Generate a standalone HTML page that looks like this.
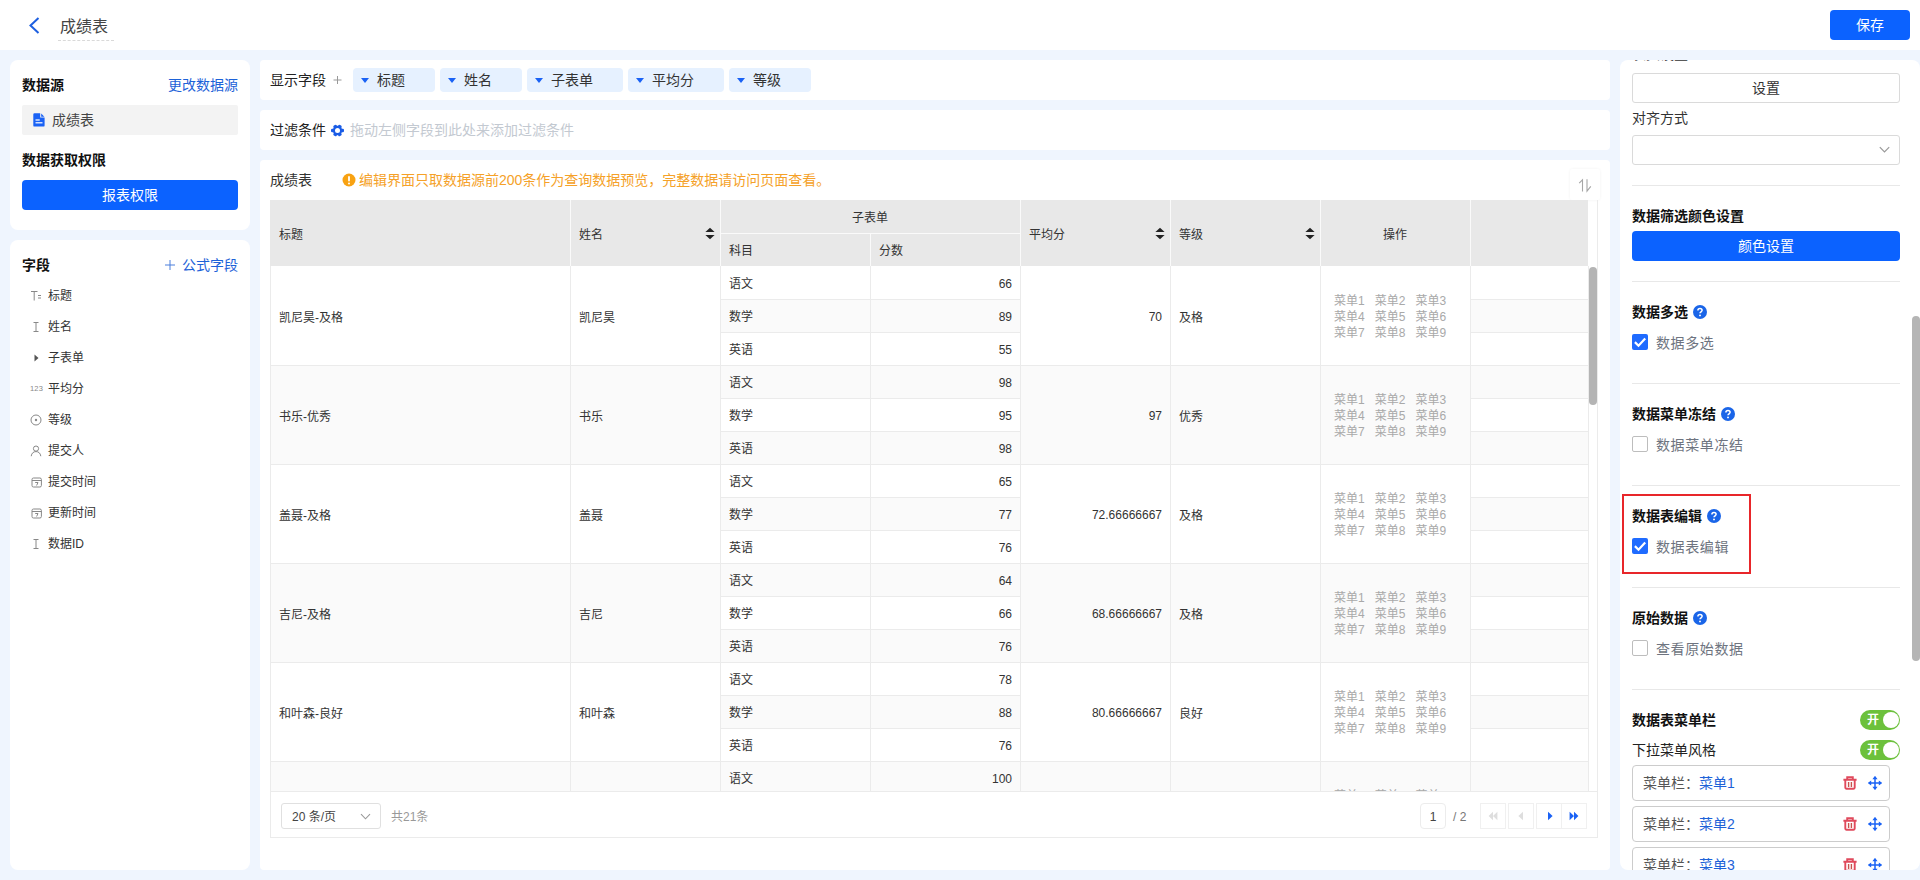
<!DOCTYPE html>
<html lang="zh-CN">
<head>
<meta charset="utf-8">
<title>成绩表</title>
<style>
*{box-sizing:border-box;margin:0;padding:0}
html,body{width:1920px;height:880px;overflow:hidden}
body{position:relative;background:#eff5fe;font-family:"Liberation Sans","Noto Sans CJK SC",sans-serif;font-size:14px;color:#333;line-height:1}
.abs{position:absolute}
.hdr{position:absolute;left:0;top:0;width:1920px;height:50px;background:#fff}
.card{position:absolute;background:#fff;border-radius:8px}
.t{position:absolute;white-space:nowrap;line-height:20px;height:20px}
.b{font-weight:700;color:#111}
.blue{color:#1d62d8}
.btn{position:absolute;background:#0b62ff;color:#fff;border-radius:4px;text-align:center;font-size:14px}
.chip{position:absolute;top:68px;height:24px;background:#e6f1ff;border-radius:4px;font-size:14px;line-height:24px;color:#333;padding-left:24px}
.chip:before{content:"";position:absolute;left:8px;top:10px;border:4.5px solid transparent;border-top:5px solid #1a62f5;border-bottom:0}
.vl{position:absolute;width:1px;background:#ebebeb}
.hl{position:absolute;height:1px;background:#ebebeb}
.c{position:absolute;font-size:12px;color:#333;white-space:nowrap;line-height:20px;height:20px}
.r{text-align:right}
.m{position:absolute;width:130px;font-size:12px;color:#a9a9a9;line-height:16px;white-space:nowrap}
.m span{display:inline-block;margin-right:10px}
.sort{position:absolute;width:10px;height:13px}
.dv{position:absolute;left:1632px;width:268px;height:1px;background:#e8e8e8}
.cb{position:absolute;left:1632px;width:16px;height:16px;border-radius:2px}
.cb.on{background:#1f6bff}
.cb.off{border:1px solid #bdbdbd;background:#fff}
.lb{position:absolute;left:1656px;white-space:nowrap;line-height:20px;height:20px;font-size:14px;letter-spacing:0.6px;color:#6e7480}
.tg{position:absolute;left:1860px;width:40px;height:20px;border-radius:10px;background:#6cc13c;color:#fff;font-size:12px;font-weight:700;line-height:20px;padding-left:7px}
.tg:after{content:"";position:absolute;left:23px;top:2px;width:16px;height:16px;border-radius:8px;background:#fff}
.mb{position:absolute;width:258px;height:36px;border:1px solid #ccc;border-radius:4px}
</style>
</head>
<body>
<div class="hdr">
<svg class="abs" style="left:27px;top:16px" width="14" height="18" viewBox="0 0 14 18"><path d="M11.5 2 L3.5 9.5 L11.5 17" fill="none" stroke="#1d5fe0" stroke-width="2"/></svg>
<div class="t" style="left:60px;top:16.5px;font-size:16px;color:#444">成绩表</div>
<div class="abs" style="left:58px;top:40px;width:56px;height:0;border-top:1px dashed #d9d9d9"></div>
<div class="btn" style="left:1830px;top:10px;width:80px;height:30px;line-height:30px">保存</div>
</div>
<div class="card" style="left:10px;top:60px;width:240px;height:170px"></div>
<div class="card" style="left:10px;top:240px;width:240px;height:630px"></div>
<div class="t b" style="left:22px;top:75px">数据源</div>
<div class="t blue" style="left:168px;top:75px">更改数据源</div>
<div class="abs" style="left:22px;top:105px;width:216px;height:30px;background:#f3f3f3;border-radius:2px"></div>
<svg class="abs" style="left:33px;top:113px" width="12" height="14" viewBox="0 0 12 14"><path d="M1.5 0.3H7.2V4.6H11.6V12.4a1.2 1.2 0 0 1-1.2 1.2H1.5a1.2 1.2 0 0 1-1.2-1.2V1.5a1.2 1.2 0 0 1 1.2-1.2Z" fill="#1a62f5"/><path d="M8.2 0.5L11.4 3.7H8.2Z" fill="#1a62f5"/><rect x="2.5" y="6.4" width="4.2" height="1.2" fill="#fff"/><rect x="2.5" y="9.2" width="7" height="1.2" fill="#fff"/></svg>
<div class="t" style="left:52px;top:110px;color:#444">成绩表</div>
<div class="t b" style="left:22px;top:150px">数据获取权限</div>
<div class="btn" style="left:22px;top:180px;width:216px;height:30px;line-height:30px">报表权限</div>
<div class="t b" style="left:22px;top:255px">字段</div>
<div class="t blue" style="left:182px;top:255px">公式字段</div>
<svg class="abs" style="left:164px;top:259px" width="12" height="12" viewBox="0 0 12 12"><path d="M6 1V11M1 6H11" stroke="#4a7fdc" stroke-width="1" fill="none"/></svg>
<svg class="abs" style="left:29px;top:289px" width="14" height="14" viewBox="0 0 14 14"><path d="M2 2.5H8.5M5.2 2.5V11.5M9 6.5H12M9 9H12" stroke="#888" stroke-width="1" fill="none"/></svg>
<div class="t" style="left:48px;top:286px;font-size:12px;color:#333">标题</div>
<svg class="abs" style="left:29px;top:320px" width="14" height="14" viewBox="0 0 14 14"><path d="M4.5 2.5H9.5M7 2.5V11.5M4.5 11.5H9.5" stroke="#888" stroke-width="1" fill="none"/></svg>
<div class="t" style="left:48px;top:317px;font-size:12px;color:#333">姓名</div>
<svg class="abs" style="left:29px;top:351px" width="14" height="14" viewBox="0 0 14 14"><path d="M5.5 3.5L9.5 7L5.5 10.5Z" fill="#555"/></svg>
<div class="t" style="left:48px;top:348px;font-size:12px;color:#333">子表单</div>
<div class="t" style="left:30px;top:379px;font-size:7.5px;color:#888;letter-spacing:0.2px">123</div>
<div class="t" style="left:48px;top:379px;font-size:12px;color:#333">平均分</div>
<svg class="abs" style="left:29px;top:413px" width="14" height="14" viewBox="0 0 14 14"><circle cx="7" cy="7" r="5" stroke="#888" stroke-width="1" fill="none"/><circle cx="7" cy="7" r="1.2" fill="#888"/></svg>
<div class="t" style="left:48px;top:410px;font-size:12px;color:#333">等级</div>
<svg class="abs" style="left:29px;top:444px" width="14" height="14" viewBox="0 0 14 14"><circle cx="7" cy="4.6" r="2.6" stroke="#888" stroke-width="1" fill="none"/><path d="M2.2 12.2C2.6 9 4.6 7.6 7 7.6S11.4 9 11.8 12.2" stroke="#888" stroke-width="1" fill="none"/></svg>
<div class="t" style="left:48px;top:441px;font-size:12px;color:#333">提交人</div>
<svg class="abs" style="left:29px;top:475px" width="14" height="14" viewBox="0 0 14 14"><rect x="3" y="3" width="9.4" height="9" rx="1.5" stroke="#888" stroke-width="1" fill="none"/><path d="M3 5.5H12.4M6.2 7.5H9L7.6 10.5" stroke="#888" stroke-width="1" fill="none"/></svg>
<div class="t" style="left:48px;top:472px;font-size:12px;color:#333">提交时间</div>
<svg class="abs" style="left:29px;top:506px" width="14" height="14" viewBox="0 0 14 14"><rect x="3" y="3" width="9.4" height="9" rx="1.5" stroke="#888" stroke-width="1" fill="none"/><path d="M3 5.5H12.4M6.2 7.5H9L7.6 10.5" stroke="#888" stroke-width="1" fill="none"/></svg>
<div class="t" style="left:48px;top:503px;font-size:12px;color:#333">更新时间</div>
<svg class="abs" style="left:29px;top:537px" width="14" height="14" viewBox="0 0 14 14"><path d="M4.5 2.5H9.5M7 2.5V11.5M4.5 11.5H9.5" stroke="#888" stroke-width="1" fill="none"/></svg>
<div class="t" style="left:48px;top:534px;font-size:12px;color:#333">数据ID</div>
<div class="card" style="left:260px;top:60px;width:1350px;height:40px;border-radius:4px"></div>
<div class="card" style="left:260px;top:110px;width:1350px;height:40px;border-radius:4px"></div>
<div class="card" style="left:260px;top:160px;width:1350px;height:710px;border-radius:4px"></div>
<div class="t" style="left:270px;top:70px;color:#222">显示字段</div>
<svg class="abs" style="left:332px;top:75px" width="10" height="10" viewBox="0 0 10 10"><path d="M5.5 1V9M1.5 5H9.5" stroke="#999" stroke-width="1" fill="none"/></svg>
<div class="chip" style="left:353px;width:82px">标题</div>
<div class="chip" style="left:440px;width:82px">姓名</div>
<div class="chip" style="left:527px;width:96px">子表单</div>
<div class="chip" style="left:628px;width:96px">平均分</div>
<div class="chip" style="left:729px;width:82px">等级</div>
<div class="t" style="left:270px;top:120px;color:#222">过滤条件</div>
<svg class="abs" style="left:331px;top:123.5px" width="13" height="13" viewBox="0 0 13 13"><g fill="#1a5ce6"><circle cx="6.5" cy="6.5" r="4.7"/><rect x="0" y="4.7" width="13" height="3.6" rx="1.2"/><rect x="0.4" y="4.7" width="12.2" height="3.6" rx="1.2" transform="rotate(60 6.5 6.5)"/><rect x="0.4" y="4.7" width="12.2" height="3.6" rx="1.2" transform="rotate(120 6.5 6.5)"/></g><circle cx="6.5" cy="6.5" r="2.5" fill="#fff"/></svg>
<div class="t" style="left:350px;top:120px;color:#c3c9d1">拖动左侧字段到此处来添加过滤条件</div>
<div class="t" style="left:270px;top:170px;color:#333">成绩表</div>
<svg class="abs" style="left:342px;top:173px" width="14" height="14" viewBox="0 0 14 14"><circle cx="7" cy="7" r="6.5" fill="#f8a212"/><rect x="6.1" y="3" width="1.8" height="5.4" rx="0.9" fill="#fff"/><circle cx="7" cy="10.4" r="1" fill="#fff"/></svg>
<div class="t" style="left:359px;top:170px;color:#f5a128">编辑界面只取数据源前200条作为查询数据预览，完整数据请访问页面查看。</div>
<div class="abs" style="left:1570px;top:169px;width:30px;height:31px;background:#fff;box-shadow:0 0 3px rgba(0,0,0,0.06);border-radius:2px"></div>
<svg class="abs" style="left:1577px;top:177px" width="16" height="16" viewBox="0 0 16 16"><path d="M2.2 6.2L5.5 2.8V14.4M10 2.3V14.2L13.8 9.3" fill="none" stroke="#a6a6a6" stroke-width="1.1"/></svg>
<div class="abs" style="left:270px;top:200px;width:1318px;height:66px;background:#e8e8e8"></div>
<div class="abs" style="left:570px;top:200px;width:1px;height:66px;background:#fafafa"></div>
<div class="abs" style="left:720px;top:200px;width:1px;height:66px;background:#fafafa"></div>
<div class="abs" style="left:1020px;top:200px;width:1px;height:66px;background:#fafafa"></div>
<div class="abs" style="left:1170px;top:200px;width:1px;height:66px;background:#fafafa"></div>
<div class="abs" style="left:1320px;top:200px;width:1px;height:66px;background:#fafafa"></div>
<div class="abs" style="left:1470px;top:200px;width:1px;height:66px;background:#fafafa"></div>
<div class="abs" style="left:870px;top:233px;width:1px;height:33px;background:#fafafa"></div>
<div class="abs" style="left:721px;top:233px;width:299px;height:1px;background:#fafafa"></div>
<div class="c" style="left:279px;top:225px">标题</div><div class="c" style="left:579px;top:225px">姓名</div><div class="c" style="left:820px;top:208px;width:100px;text-align:center">子表单</div><div class="c" style="left:729px;top:241px">科目</div><div class="c" style="left:879px;top:241px">分数</div><div class="c" style="left:1029px;top:225px">平均分</div><div class="c" style="left:1179px;top:225px">等级</div><div class="c" style="left:1345px;top:225px;width:100px;text-align:center">操作</div>
<svg class="sort" style="left:705px;top:227px" viewBox="0 0 10 13"><path d="M0.4 5.1L5 0.8L9.6 5.1Z" fill="#222"/><path d="M0.4 7.9L5 12.2L9.6 7.9Z" fill="#222"/></svg>
<svg class="sort" style="left:1155px;top:227px" viewBox="0 0 10 13"><path d="M0.4 5.1L5 0.8L9.6 5.1Z" fill="#222"/><path d="M0.4 7.9L5 12.2L9.6 7.9Z" fill="#222"/></svg>
<svg class="sort" style="left:1305px;top:227px" viewBox="0 0 10 13"><path d="M0.4 5.1L5 0.8L9.6 5.1Z" fill="#222"/><path d="M0.4 7.9L5 12.2L9.6 7.9Z" fill="#222"/></svg>
<div class="abs" style="left:270px;top:266px;width:1318px;height:526px;overflow:hidden">
<div class="abs" style="left:451px;top:0px;width:299px;height:33px;background:#fff"></div>
<div class="abs" style="left:1201px;top:0px;width:117px;height:33px;background:#fff"></div>
<div class="abs" style="left:451px;top:33px;width:299px;height:33px;background:#fafafa"></div>
<div class="abs" style="left:1201px;top:33px;width:117px;height:33px;background:#fafafa"></div>
<div class="abs" style="left:451px;top:66px;width:299px;height:33px;background:#fff"></div>
<div class="abs" style="left:1201px;top:66px;width:117px;height:33px;background:#fff"></div>
<div class="abs" style="left:0;top:99px;width:1318px;height:99px;background:#fafafa"></div>
<div class="abs" style="left:451px;top:99px;width:299px;height:33px;background:#fafafa"></div>
<div class="abs" style="left:1201px;top:99px;width:117px;height:33px;background:#fafafa"></div>
<div class="abs" style="left:451px;top:132px;width:299px;height:33px;background:#fff"></div>
<div class="abs" style="left:1201px;top:132px;width:117px;height:33px;background:#fff"></div>
<div class="abs" style="left:451px;top:165px;width:299px;height:33px;background:#fafafa"></div>
<div class="abs" style="left:1201px;top:165px;width:117px;height:33px;background:#fafafa"></div>
<div class="abs" style="left:451px;top:198px;width:299px;height:33px;background:#fff"></div>
<div class="abs" style="left:1201px;top:198px;width:117px;height:33px;background:#fff"></div>
<div class="abs" style="left:451px;top:231px;width:299px;height:33px;background:#fafafa"></div>
<div class="abs" style="left:1201px;top:231px;width:117px;height:33px;background:#fafafa"></div>
<div class="abs" style="left:451px;top:264px;width:299px;height:33px;background:#fff"></div>
<div class="abs" style="left:1201px;top:264px;width:117px;height:33px;background:#fff"></div>
<div class="abs" style="left:0;top:297px;width:1318px;height:99px;background:#fafafa"></div>
<div class="abs" style="left:451px;top:297px;width:299px;height:33px;background:#fafafa"></div>
<div class="abs" style="left:1201px;top:297px;width:117px;height:33px;background:#fafafa"></div>
<div class="abs" style="left:451px;top:330px;width:299px;height:33px;background:#fff"></div>
<div class="abs" style="left:1201px;top:330px;width:117px;height:33px;background:#fff"></div>
<div class="abs" style="left:451px;top:363px;width:299px;height:33px;background:#fafafa"></div>
<div class="abs" style="left:1201px;top:363px;width:117px;height:33px;background:#fafafa"></div>
<div class="abs" style="left:451px;top:396px;width:299px;height:33px;background:#fff"></div>
<div class="abs" style="left:1201px;top:396px;width:117px;height:33px;background:#fff"></div>
<div class="abs" style="left:451px;top:429px;width:299px;height:33px;background:#fafafa"></div>
<div class="abs" style="left:1201px;top:429px;width:117px;height:33px;background:#fafafa"></div>
<div class="abs" style="left:451px;top:462px;width:299px;height:33px;background:#fff"></div>
<div class="abs" style="left:1201px;top:462px;width:117px;height:33px;background:#fff"></div>
<div class="abs" style="left:0;top:495px;width:1318px;height:99px;background:#fafafa"></div>
<div class="abs" style="left:451px;top:495px;width:299px;height:33px;background:#fafafa"></div>
<div class="abs" style="left:1201px;top:495px;width:117px;height:33px;background:#fafafa"></div>
<div class="abs" style="left:451px;top:528px;width:299px;height:33px;background:#fff"></div>
<div class="abs" style="left:1201px;top:528px;width:117px;height:33px;background:#fff"></div>
<div class="abs" style="left:451px;top:561px;width:299px;height:33px;background:#fafafa"></div>
<div class="abs" style="left:1201px;top:561px;width:117px;height:33px;background:#fafafa"></div>
<div class="hl" style="left:451px;top:33px;width:299px"></div>
<div class="hl" style="left:1201px;top:33px;width:117px"></div>
<div class="hl" style="left:451px;top:66px;width:299px"></div>
<div class="hl" style="left:1201px;top:66px;width:117px"></div>
<div class="hl" style="left:451px;top:99px;width:299px"></div>
<div class="hl" style="left:1201px;top:99px;width:117px"></div>
<div class="hl" style="left:0;top:99px;width:1318px"></div>
<div class="hl" style="left:451px;top:132px;width:299px"></div>
<div class="hl" style="left:1201px;top:132px;width:117px"></div>
<div class="hl" style="left:451px;top:165px;width:299px"></div>
<div class="hl" style="left:1201px;top:165px;width:117px"></div>
<div class="hl" style="left:451px;top:198px;width:299px"></div>
<div class="hl" style="left:1201px;top:198px;width:117px"></div>
<div class="hl" style="left:0;top:198px;width:1318px"></div>
<div class="hl" style="left:451px;top:231px;width:299px"></div>
<div class="hl" style="left:1201px;top:231px;width:117px"></div>
<div class="hl" style="left:451px;top:264px;width:299px"></div>
<div class="hl" style="left:1201px;top:264px;width:117px"></div>
<div class="hl" style="left:451px;top:297px;width:299px"></div>
<div class="hl" style="left:1201px;top:297px;width:117px"></div>
<div class="hl" style="left:0;top:297px;width:1318px"></div>
<div class="hl" style="left:451px;top:330px;width:299px"></div>
<div class="hl" style="left:1201px;top:330px;width:117px"></div>
<div class="hl" style="left:451px;top:363px;width:299px"></div>
<div class="hl" style="left:1201px;top:363px;width:117px"></div>
<div class="hl" style="left:451px;top:396px;width:299px"></div>
<div class="hl" style="left:1201px;top:396px;width:117px"></div>
<div class="hl" style="left:0;top:396px;width:1318px"></div>
<div class="hl" style="left:451px;top:429px;width:299px"></div>
<div class="hl" style="left:1201px;top:429px;width:117px"></div>
<div class="hl" style="left:451px;top:462px;width:299px"></div>
<div class="hl" style="left:1201px;top:462px;width:117px"></div>
<div class="hl" style="left:451px;top:495px;width:299px"></div>
<div class="hl" style="left:1201px;top:495px;width:117px"></div>
<div class="hl" style="left:0;top:495px;width:1318px"></div>
<div class="hl" style="left:451px;top:528px;width:299px"></div>
<div class="hl" style="left:1201px;top:528px;width:117px"></div>
<div class="hl" style="left:451px;top:561px;width:299px"></div>
<div class="hl" style="left:1201px;top:561px;width:117px"></div>
<div class="hl" style="left:451px;top:594px;width:299px"></div>
<div class="hl" style="left:1201px;top:594px;width:117px"></div>
<div class="hl" style="left:0;top:594px;width:1318px"></div>
<div class="vl" style="left:300px;top:0;height:526px"></div>
<div class="vl" style="left:450px;top:0;height:526px"></div>
<div class="vl" style="left:600px;top:0;height:526px"></div>
<div class="vl" style="left:750px;top:0;height:526px"></div>
<div class="vl" style="left:900px;top:0;height:526px"></div>
<div class="vl" style="left:1050px;top:0;height:526px"></div>
<div class="vl" style="left:1200px;top:0;height:526px"></div>
<div class="c" style="left:459px;top:8px">语文</div>
<div class="c r" style="left:601px;top:8px;width:141px">66</div>
<div class="c" style="left:459px;top:41px">数学</div>
<div class="c r" style="left:601px;top:41px;width:141px">89</div>
<div class="c" style="left:459px;top:74px">英语</div>
<div class="c r" style="left:601px;top:74px;width:141px">55</div>
<div class="c" style="left:9px;top:42px">凯尼昊-及格</div>
<div class="c" style="left:309px;top:42px">凯尼昊</div>
<div class="c r" style="left:751px;top:41px;width:141px">70</div>
<div class="c" style="left:909px;top:42px">及格</div>
<div class="m" style="left:1064px;top:27px"><span>菜单1</span><span>菜单2</span><span>菜单3</span><br><span>菜单4</span><span>菜单5</span><span>菜单6</span><br><span>菜单7</span><span>菜单8</span><span>菜单9</span></div>
<div class="c" style="left:459px;top:107px">语文</div>
<div class="c r" style="left:601px;top:107px;width:141px">98</div>
<div class="c" style="left:459px;top:140px">数学</div>
<div class="c r" style="left:601px;top:140px;width:141px">95</div>
<div class="c" style="left:459px;top:173px">英语</div>
<div class="c r" style="left:601px;top:173px;width:141px">98</div>
<div class="c" style="left:9px;top:141px">书乐-优秀</div>
<div class="c" style="left:309px;top:141px">书乐</div>
<div class="c r" style="left:751px;top:140px;width:141px">97</div>
<div class="c" style="left:909px;top:141px">优秀</div>
<div class="m" style="left:1064px;top:126px"><span>菜单1</span><span>菜单2</span><span>菜单3</span><br><span>菜单4</span><span>菜单5</span><span>菜单6</span><br><span>菜单7</span><span>菜单8</span><span>菜单9</span></div>
<div class="c" style="left:459px;top:206px">语文</div>
<div class="c r" style="left:601px;top:206px;width:141px">65</div>
<div class="c" style="left:459px;top:239px">数学</div>
<div class="c r" style="left:601px;top:239px;width:141px">77</div>
<div class="c" style="left:459px;top:272px">英语</div>
<div class="c r" style="left:601px;top:272px;width:141px">76</div>
<div class="c" style="left:9px;top:240px">盖聂-及格</div>
<div class="c" style="left:309px;top:240px">盖聂</div>
<div class="c r" style="left:751px;top:239px;width:141px">72.66666667</div>
<div class="c" style="left:909px;top:240px">及格</div>
<div class="m" style="left:1064px;top:225px"><span>菜单1</span><span>菜单2</span><span>菜单3</span><br><span>菜单4</span><span>菜单5</span><span>菜单6</span><br><span>菜单7</span><span>菜单8</span><span>菜单9</span></div>
<div class="c" style="left:459px;top:305px">语文</div>
<div class="c r" style="left:601px;top:305px;width:141px">64</div>
<div class="c" style="left:459px;top:338px">数学</div>
<div class="c r" style="left:601px;top:338px;width:141px">66</div>
<div class="c" style="left:459px;top:371px">英语</div>
<div class="c r" style="left:601px;top:371px;width:141px">76</div>
<div class="c" style="left:9px;top:339px">吉尼-及格</div>
<div class="c" style="left:309px;top:339px">吉尼</div>
<div class="c r" style="left:751px;top:338px;width:141px">68.66666667</div>
<div class="c" style="left:909px;top:339px">及格</div>
<div class="m" style="left:1064px;top:324px"><span>菜单1</span><span>菜单2</span><span>菜单3</span><br><span>菜单4</span><span>菜单5</span><span>菜单6</span><br><span>菜单7</span><span>菜单8</span><span>菜单9</span></div>
<div class="c" style="left:459px;top:404px">语文</div>
<div class="c r" style="left:601px;top:404px;width:141px">78</div>
<div class="c" style="left:459px;top:437px">数学</div>
<div class="c r" style="left:601px;top:437px;width:141px">88</div>
<div class="c" style="left:459px;top:470px">英语</div>
<div class="c r" style="left:601px;top:470px;width:141px">76</div>
<div class="c" style="left:9px;top:438px">和叶森-良好</div>
<div class="c" style="left:309px;top:438px">和叶森</div>
<div class="c r" style="left:751px;top:437px;width:141px">80.66666667</div>
<div class="c" style="left:909px;top:438px">良好</div>
<div class="m" style="left:1064px;top:423px"><span>菜单1</span><span>菜单2</span><span>菜单3</span><br><span>菜单4</span><span>菜单5</span><span>菜单6</span><br><span>菜单7</span><span>菜单8</span><span>菜单9</span></div>
<div class="c" style="left:459px;top:503px">语文</div>
<div class="c r" style="left:601px;top:503px;width:141px">100</div>
<div class="c" style="left:459px;top:536px">数学</div>
<div class="c r" style="left:601px;top:536px;width:141px"></div>
<div class="c" style="left:459px;top:569px">英语</div>
<div class="c r" style="left:601px;top:569px;width:141px"></div>
<div class="m" style="left:1064px;top:522px"><span>菜单1</span><span>菜单2</span><span>菜单3</span><br><span>菜单4</span><span>菜单5</span><span>菜单6</span><br><span>菜单7</span><span>菜单8</span><span>菜单9</span></div>
</div>
<div class="vl" style="left:270px;top:266px;height:572px"></div>
<div class="vl" style="left:1588px;top:266px;height:526px"></div>
<div class="vl" style="left:1597px;top:200px;height:638px"></div>
<div class="hl" style="left:270px;top:791px;width:1328px"></div>
<div class="hl" style="left:270px;top:837px;width:1328px"></div>
<div class="abs" style="left:1589px;top:267px;width:8px;height:138px;border-radius:4px;background:#b4b4b4"></div>
<div class="abs" style="left:281px;top:803px;width:100px;height:26px;border:1px solid #e0e0e0;border-radius:3px"></div>
<div class="c" style="left:292px;top:807px;color:#444">20 条/页</div>
<svg class="abs" style="left:360px;top:813px" width="11" height="8" viewBox="0 0 11 8"><path d="M1 1.2L5.5 5.8L10 1.2" fill="none" stroke="#999" stroke-width="1.1"/></svg>
<div class="c" style="left:391px;top:807px;color:#999">共21条</div>
<div class="abs" style="left:1420px;top:803px;width:26px;height:26px;border:1px solid #ececec;border-radius:4px"></div>
<div class="c" style="left:1420px;top:807px;width:26px;text-align:center;color:#444">1</div>
<div class="c" style="left:1453px;top:807px;color:#777">/ 2</div>
<div class="abs" style="left:1480px;top:803px;width:26px;height:26px;border:1px solid #f0f0f0"></div>
<div class="abs" style="left:1508px;top:803px;width:26px;height:26px;border:1px solid #f0f0f0"></div>
<div class="abs" style="left:1536px;top:803px;width:26px;height:26px;border:1px solid #f0f0f0"></div>
<div class="abs" style="left:1561px;top:803px;width:26px;height:26px;border:1px solid #f0f0f0"></div>
<svg class="abs" style="left:1488px;top:811px" width="10" height="10" viewBox="0 0 10 10"><path d="M5 0.8V9.2L0.6 5ZM9.4 0.8V9.2L5 5Z" fill="#dedede"/></svg>
<svg class="abs" style="left:1516px;top:811px" width="10" height="10" viewBox="0 0 10 10"><path d="M7 0.8V9.2L2.4 5Z" fill="#dedede"/></svg>
<svg class="abs" style="left:1545px;top:811px" width="10" height="10" viewBox="0 0 10 10"><path d="M3 0.8V9.2L7.6 5Z" fill="#1a62f5"/></svg>
<svg class="abs" style="left:1569px;top:811px" width="10" height="10" viewBox="0 0 10 10"><path d="M0.6 0.8V9.2L5 5ZM5 0.8V9.2L9.4 5Z" fill="#1a62f5"/></svg>
<div class="abs" style="left:1620px;top:60px;width:300px;height:810px;background:#fff;border-radius:8px;overflow:hidden">
<div class="t" style="left:12px;top:-16px;color:#333">表头设置</div>
</div>
<div class="abs" style="left:1912px;top:316px;width:8px;height:345px;border-radius:4px;background:#b5b5b5"></div>
<div class="abs" style="left:1632px;top:73px;width:268px;height:30px;border:1px solid #dadada;border-radius:3px;text-align:center;line-height:28px;color:#333">设置</div>
<div class="t" style="left:1632px;top:108px;color:#333">对齐方式</div>
<div class="abs" style="left:1632px;top:135px;width:268px;height:30px;border:1px solid #dadada;border-radius:3px"></div>
<svg class="abs" style="left:1879px;top:146px" width="11" height="8" viewBox="0 0 11 8"><path d="M0.8 1.2L5.5 6L10.2 1.2" fill="none" stroke="#999" stroke-width="1.2"/></svg>
<div class="dv" style="top:185px"></div>
<div class="t b" style="left:1632px;top:206px">数据筛选颜色设置</div>
<div class="btn" style="left:1632px;top:231px;width:268px;height:30px;line-height:30px">颜色设置</div>
<div class="dv" style="top:281px"></div>
<div class="t b" style="left:1632px;top:302px">数据多选</div>
<svg class="abs" style="left:1693px;top:305px" width="14" height="14" viewBox="0 0 14 14"><circle cx="7" cy="7" r="7" fill="#1a65e8"/><path d="M4.9 5.5C4.9 4.2 5.8 3.4 7 3.4S9.1 4.2 9.1 5.3C9.1 6.7 7 6.9 7 8.3" fill="none" stroke="#fff" stroke-width="1.5"/><circle cx="7" cy="10.4" r="0.95" fill="#fff"/></svg>
<div class="cb on" style="top:334px"></div>
<svg class="abs" style="left:1632px;top:334px" width="16" height="16" viewBox="0 0 16 16"><path d="M2.9 8.1L6.5 11.7L13.2 4.5" fill="none" stroke="#fff" stroke-width="2.2"/></svg>
<div class="lb" style="top:333px">数据多选</div>
<div class="dv" style="top:383px"></div>
<div class="t b" style="left:1632px;top:404px">数据菜单冻结</div>
<svg class="abs" style="left:1721px;top:407px" width="14" height="14" viewBox="0 0 14 14"><circle cx="7" cy="7" r="7" fill="#1a65e8"/><path d="M4.9 5.5C4.9 4.2 5.8 3.4 7 3.4S9.1 4.2 9.1 5.3C9.1 6.7 7 6.9 7 8.3" fill="none" stroke="#fff" stroke-width="1.5"/><circle cx="7" cy="10.4" r="0.95" fill="#fff"/></svg>
<div class="cb off" style="top:436px"></div>
<div class="lb" style="top:435px">数据菜单冻结</div>
<div class="dv" style="top:485px"></div>
<div class="t b" style="left:1632px;top:506px">数据表编辑</div>
<svg class="abs" style="left:1707px;top:509px" width="14" height="14" viewBox="0 0 14 14"><circle cx="7" cy="7" r="7" fill="#1a65e8"/><path d="M4.9 5.5C4.9 4.2 5.8 3.4 7 3.4S9.1 4.2 9.1 5.3C9.1 6.7 7 6.9 7 8.3" fill="none" stroke="#fff" stroke-width="1.5"/><circle cx="7" cy="10.4" r="0.95" fill="#fff"/></svg>
<div class="cb on" style="top:538px"></div>
<svg class="abs" style="left:1632px;top:538px" width="16" height="16" viewBox="0 0 16 16"><path d="M2.9 8.1L6.5 11.7L13.2 4.5" fill="none" stroke="#fff" stroke-width="2.2"/></svg>
<div class="lb" style="top:537px">数据表编辑</div>
<div class="dv" style="top:587px"></div>
<div class="t b" style="left:1632px;top:608px">原始数据</div>
<svg class="abs" style="left:1693px;top:611px" width="14" height="14" viewBox="0 0 14 14"><circle cx="7" cy="7" r="7" fill="#1a65e8"/><path d="M4.9 5.5C4.9 4.2 5.8 3.4 7 3.4S9.1 4.2 9.1 5.3C9.1 6.7 7 6.9 7 8.3" fill="none" stroke="#fff" stroke-width="1.5"/><circle cx="7" cy="10.4" r="0.95" fill="#fff"/></svg>
<div class="cb off" style="top:640px"></div>
<div class="lb" style="top:639px">查看原始数据</div>
<div class="dv" style="top:689px"></div>
<div class="abs" style="left:1622px;top:494px;width:129px;height:80px;border:2px solid #e8262a"></div>
<div class="t b" style="left:1632px;top:710px">数据表菜单栏</div><div class="tg" style="top:710px">开</div>
<div class="t" style="left:1632px;top:740px;color:#222">下拉菜单风格</div><div class="tg" style="top:740px">开</div>
<div class="abs" style="left:1620px;top:760px;width:292px;height:110px;overflow:hidden">
<div class="mb" style="left:12px;top:5px"></div>
<div class="t" style="left:23px;top:13px;color:#555">菜单栏：<span class="blue">菜单1</span></div>
<svg class="abs" style="left:223px;top:16px" width="14" height="14" viewBox="0 0 14 14"><path d="M0.4 3.8H13.6M4.2 3.6V1.3H9.8V3.6M2.3 4V11.6a1.2 1.2 0 0 0 1.2 1.2H10.5a1.2 1.2 0 0 0 1.2-1.2V4" fill="none" stroke="#e04a5c" stroke-width="1.9"/><path d="M5.6 6V11M8.4 6V11" fill="none" stroke="#c8524c" stroke-width="1.4"/></svg>
<svg class="abs" style="left:248px;top:16px" width="14" height="14" viewBox="0 0 14 14"><path d="M7 1.5V12.5M1.5 7H12.5" stroke="#1a62f5" stroke-width="1.5" fill="none"/><path d="M7 -0.2L9.6 3.2H4.4ZM7 14.2L9.6 10.8H4.4ZM-0.2 7L3.2 4.4V9.6ZM14.2 7L10.8 4.4V9.6Z" fill="#1a62f5"/></svg>
<div class="mb" style="left:12px;top:46px"></div>
<div class="t" style="left:23px;top:54px;color:#555">菜单栏：<span class="blue">菜单2</span></div>
<svg class="abs" style="left:223px;top:57px" width="14" height="14" viewBox="0 0 14 14"><path d="M0.4 3.8H13.6M4.2 3.6V1.3H9.8V3.6M2.3 4V11.6a1.2 1.2 0 0 0 1.2 1.2H10.5a1.2 1.2 0 0 0 1.2-1.2V4" fill="none" stroke="#e04a5c" stroke-width="1.9"/><path d="M5.6 6V11M8.4 6V11" fill="none" stroke="#c8524c" stroke-width="1.4"/></svg>
<svg class="abs" style="left:248px;top:57px" width="14" height="14" viewBox="0 0 14 14"><path d="M7 1.5V12.5M1.5 7H12.5" stroke="#1a62f5" stroke-width="1.5" fill="none"/><path d="M7 -0.2L9.6 3.2H4.4ZM7 14.2L9.6 10.8H4.4ZM-0.2 7L3.2 4.4V9.6ZM14.2 7L10.8 4.4V9.6Z" fill="#1a62f5"/></svg>
<div class="mb" style="left:12px;top:87px"></div>
<div class="t" style="left:23px;top:95px;color:#555">菜单栏：<span class="blue">菜单3</span></div>
<svg class="abs" style="left:223px;top:98px" width="14" height="14" viewBox="0 0 14 14"><path d="M0.4 3.8H13.6M4.2 3.6V1.3H9.8V3.6M2.3 4V11.6a1.2 1.2 0 0 0 1.2 1.2H10.5a1.2 1.2 0 0 0 1.2-1.2V4" fill="none" stroke="#e04a5c" stroke-width="1.9"/><path d="M5.6 6V11M8.4 6V11" fill="none" stroke="#c8524c" stroke-width="1.4"/></svg>
<svg class="abs" style="left:248px;top:98px" width="14" height="14" viewBox="0 0 14 14"><path d="M7 1.5V12.5M1.5 7H12.5" stroke="#1a62f5" stroke-width="1.5" fill="none"/><path d="M7 -0.2L9.6 3.2H4.4ZM7 14.2L9.6 10.8H4.4ZM-0.2 7L3.2 4.4V9.6ZM14.2 7L10.8 4.4V9.6Z" fill="#1a62f5"/></svg>
</div>
</body>
</html>
